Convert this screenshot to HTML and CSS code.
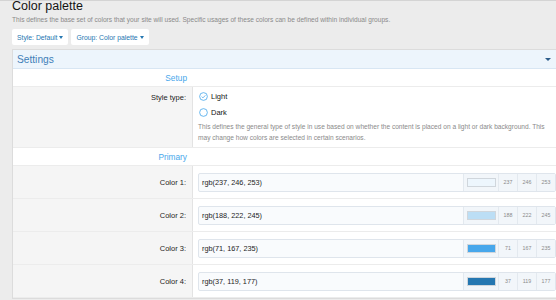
FILE: index.html
```html
<!DOCTYPE html>
<html lang="en">
  <head>
    <meta charset="UTF-8" />
    <meta name="viewport" content="width=device-width, initial-scale=1.0" />
    <title>Color palette</title>
    <link rel="stylesheet" href="styles.css">
  </head>

  <body>
    <div class="page">
      <h1 class="title">Color palette</h1>
      <p class="desc">This defines the base set of colors that your site will used. Specific usages of these colors can be defined within individual groups.</p>
      <div class="buttons">
        <a class="btn">Style: Default <span class="caret"></span></a>
        <a class="btn">Group: Color palette <span class="caret"></span></a>
      </div>

      <div class="block">
        <h2 class="block-header">Settings <span class="toggle"></span></h2>

        <div class="row heading">
          <div class="label">Setup</div>
          <div class="value"></div>
        </div>

        <div class="row">
          <div class="label label-top">Style type:</div>
          <div class="value">
            <label class="radio">
              <svg width="9" height="9" viewBox="0 0 10 10"><circle cx="5" cy="5" r="4.3" fill="none" stroke="#47a7eb" stroke-width="0.9"/><path d="M3 5.1 L4.4 6.5 L7.1 3.7" fill="none" stroke="#47a7eb" stroke-width="0.9"/></svg>
              Light
            </label>
            <label class="radio">
              <svg width="9" height="9" viewBox="0 0 10 10"><circle cx="5" cy="5" r="4.3" fill="none" stroke="#47a7eb" stroke-width="0.9"/></svg>
              Dark
            </label>
            <p class="explain">This defines the general type of style in use based on whether the content is placed on a light or dark background. This may change how colors are selected in certain scenarios.</p>
          </div>
        </div>

        <div class="row heading">
          <div class="label">Primary</div>
          <div class="value"></div>
        </div>

        <div class="row color-row">
          <div class="label">Color 1:</div>
          <div class="value">
            <div class="color-input">
              <span class="text">rgb(237, 246, 253)</span>
              <span class="swatch-cell"><span class="swatch" style="background: rgb(237, 246, 253)"></span></span>
              <span class="num">237</span><span class="num">246</span><span class="num">253</span>
            </div>
          </div>
        </div>

        <div class="row color-row">
          <div class="label">Color 2:</div>
          <div class="value">
            <div class="color-input">
              <span class="text">rgb(188, 222, 245)</span>
              <span class="swatch-cell"><span class="swatch" style="background: rgb(188, 222, 245)"></span></span>
              <span class="num">188</span><span class="num">222</span><span class="num">245</span>
            </div>
          </div>
        </div>

        <div class="row color-row">
          <div class="label">Color 3:</div>
          <div class="value">
            <div class="color-input">
              <span class="text">rgb(71, 167, 235)</span>
              <span class="swatch-cell"><span class="swatch" style="background: rgb(71, 167, 235)"></span></span>
              <span class="num">71</span><span class="num">167</span><span class="num">235</span>
            </div>
          </div>
        </div>

        <div class="row color-row">
          <div class="label">Color 4:</div>
          <div class="value">
            <div class="color-input">
              <span class="text">rgb(37, 119, 177)</span>
              <span class="swatch-cell"><span class="swatch" style="background: rgb(37, 119, 177)"></span></span>
              <span class="num">37</span><span class="num">119</span><span class="num">177</span>
            </div>
          </div>
        </div>
      </div>
    </div>
  </body>
</html>
```

FILE: styles.css
```css
body {
  margin: 0;
  background: #ececec;
  font-family: "Liberation Sans", Arial, sans-serif;
  color: #141414;
  overflow: hidden;
}

/* thin shadow of the nav bar above */
body::before {
  content: "";
  display: block;
  height: 1px;
  background: #d4d4d4;
}

.page {
  padding: 0 0 0 12px;
}

.title {
  margin: -3px 0 0;
  font-size: 12.5px;
  font-weight: normal;
  line-height: 16px;
}

.desc {
  margin: 1px 0 0;
  font-size: 6.6px;
  line-height: 9px;
  color: #8a8a8a;
}

.buttons {
  display: flex;
  gap: 3px;
  margin-top: 5px;
}

.btn {
  display: flex;
  align-items: center;
  gap: 2px;
  height: 16px;
  padding: 0 5px;
  background: #fff;
  border-radius: 2px;
  font-size: 6.8px;
  color: #2577b1;
}

.caret {
  width: 0;
  height: 0;
  border-left: 2.5px solid transparent;
  border-right: 2.5px solid transparent;
  border-top: 3px solid #2577b1;
}

.block {
  margin-top: 4px;
  margin-right: -4px;
  background: #fff;
  border: 1px solid #dcdcdc;
  border-right: 0;
}

.block-header {
  display: flex;
  justify-content: space-between;
  align-items: center;
  margin: 0;
  height: 18px;
  padding: 0 9px 0 4px;
  background: #edf5fc;
  border-bottom: 1px solid #d8e6f3;
  font-size: 10.2px;
  font-weight: normal;
  color: #3f7fb8;
}

.toggle {
  width: 0;
  height: 0;
  border-left: 3.5px solid transparent;
  border-right: 3.5px solid transparent;
  border-top: 3.5px solid #2c5d8a;
}

.row {
  display: grid;
  grid-template-columns: 180px 1fr;
  border-bottom: 1px solid #ececec;
  font-size: 7.5px;
}

.label {
  display: flex;
  align-items: center;
  justify-content: flex-end;
  padding-right: 6px;
  background: #f5f5f5;
  border-right: 1px solid #e3e3e3;
  color: #1d1d1d;
}

.label-top {
  align-items: flex-start;
  padding-top: 6px;
}

.value {
  padding: 0 5px;
}

.heading {
  height: 17px;
}

.heading .label {
  background: #fff;
  border-right: 0;
  font-size: 8.3px;
  color: #47a7eb;
}

.radio {
  display: flex;
  align-items: center;
  gap: 3px;
  height: 9px;
  margin-top: 5px;
  margin-left: 1px;
}

.radio + .radio {
  margin-top: 7px;
}

.explain {
  margin: 4px 0 4px;
  font-size: 6.6px;
  line-height: 11px;
  color: #8a8a8a;
}

.color-row {
  height: 32px;
  align-items: stretch;
}

.color-row .value {
  display: flex;
  align-items: center;
  padding: 0 4px 0 5px;
}

.color-input {
  display: flex;
  align-items: stretch;
  width: 100%;
  height: 17px;
  background: #f9fbfd;
  border: 1px solid #dfe5ec;
  border-radius: 2px;
}

.color-input .text {
  flex: 1;
  display: flex;
  align-items: center;
  padding-left: 3px;
  font-size: 7.3px;
  color: #1d1d1d;
}

.swatch-cell {
  display: flex;
  align-items: center;
  justify-content: center;
  width: 34px;
  background: #f2f6fa;
  border-left: 1px solid #e3e9ef;
}

.swatch {
  width: 29px;
  height: 9px;
  border: 1px solid #d0d6dc;
  box-sizing: border-box;
}

.num {
  display: flex;
  align-items: center;
  justify-content: center;
  width: 18px;
  background: #f2f6fa;
  border-left: 1px solid #e3e9ef;
  font-size: 5.3px;
  color: #8a8a8a;
}
```
